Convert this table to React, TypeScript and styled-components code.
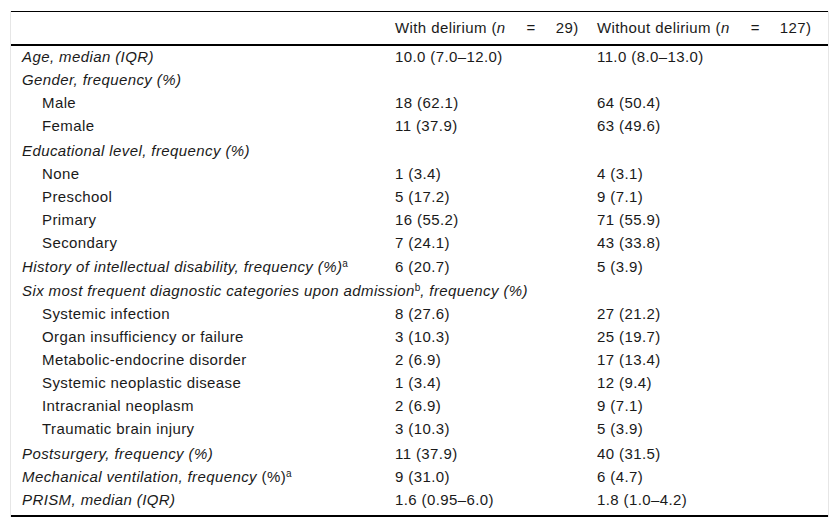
import React from 'react';
import styled, { createGlobalStyle } from 'styled-components';

const GlobalStyle = createGlobalStyle`
  html, body {
    margin: 0;
    padding: 0;
    background: #ffffff;
  }
  body {
    font-family: "Liberation Sans", Arial, sans-serif;
    color: #1a1a1a;
  }
`;

const Frame = styled.div`
  margin: 11px 0 0 10px;
  width: 817px;
  border-left: 1px solid #e6e6e6;
  border-right: 1px solid #e6e6e6;
`;

const Table = styled.table`
  width: 100%;
  border-collapse: collapse;
  table-layout: fixed;
  font-size: 15px;
  line-height: 18px;
  letter-spacing: 0.4px;
  border-top: 1px solid #000;
  border-bottom: 2px solid #000;
`;

const HeadRow = styled.tr`
  border-bottom: 2px solid #000;
`;

const HeadCell = styled.th`
  font-weight: normal;
  text-align: left;
  padding: 7px 0 7px 10px;
  height: 18px;
  white-space: nowrap;
`;

const Eq = styled.span`
  display: inline-block;
  margin: 0 20px 0 21px;
`;

const Row = styled.tr<{ $extra?: number; $last?: boolean }>`
  td {
    padding-top: ${(p) => 2 + (p.$extra || 0)}px;
    padding-bottom: ${(p) => (p.$last ? '6px' : '3px')};
  }
`;

const Label = styled.td<{ $sub?: boolean }>`
  padding-left: ${(p) => (p.$sub ? '31px' : '11px')};
  font-style: ${(p) => (p.$sub ? 'normal' : 'italic')};
  white-space: nowrap;
  vertical-align: top;
`;

const Value = styled.td`
  padding-left: 10px;
  white-space: nowrap;
  vertical-align: top;
`;

const Upright = styled.span`
  font-style: normal;
`;

const Sup = styled.sup`
  font-style: normal;
  font-size: 10px;
  line-height: 0;
  vertical-align: 5px;
  letter-spacing: 0;
`;

type Item = {
  label: React.ReactNode;
  sub?: boolean;
  extra?: number;
  span?: boolean;
  a?: string;
  b?: string;
};

const rows: Item[] = [
  { label: 'Age, median (IQR)', a: '10.0 (7.0–12.0)', b: '11.0 (8.0–13.0)' },
  { label: 'Gender, frequency (%)' },
  { label: 'Male', sub: true, a: '18 (62.1)', b: '64 (50.4)' },
  { label: 'Female', sub: true, a: '11 (37.9)', b: '63 (49.6)' },
  { label: 'Educational level, frequency (%)', extra: 2 },
  { label: 'None', sub: true, a: '1 (3.4)', b: '4 (3.1)' },
  { label: 'Preschool', sub: true, a: '5 (17.2)', b: '9 (7.1)' },
  { label: 'Primary', sub: true, a: '16 (55.2)', b: '71 (55.9)' },
  { label: 'Secondary', sub: true, a: '7 (24.1)', b: '43 (33.8)' },
  {
    label: (
      <>
        History of intellectual disability, frequency (%)<Sup>a</Sup>
      </>
    ),
    extra: 1,
    a: '6 (20.7)',
    b: '5 (3.9)',
  },
  {
    label: (
      <>
        Six most frequent diagnostic categories upon admission<Sup>b</Sup>, frequency (%)
      </>
    ),
    extra: 1,
    span: true,
  },
  { label: 'Systemic infection', sub: true, a: '8 (27.6)', b: '27 (21.2)' },
  { label: 'Organ insufficiency or failure', sub: true, a: '3 (10.3)', b: '25 (19.7)' },
  { label: 'Metabolic-endocrine disorder', sub: true, a: '2 (6.9)', b: '17 (13.4)' },
  { label: 'Systemic neoplastic disease', sub: true, a: '1 (3.4)', b: '12 (9.4)' },
  { label: 'Intracranial neoplasm', sub: true, a: '2 (6.9)', b: '9 (7.1)' },
  { label: 'Traumatic brain injury', sub: true, a: '3 (10.3)', b: '5 (3.9)' },
  { label: 'Postsurgery, frequency (%)', extra: 2, a: '11 (37.9)', b: '40 (31.5)' },
  {
    label: (
      <>
        Mechanical ventilation, frequency <Upright>(%)</Upright>
        <Sup>a</Sup>
      </>
    ),
    a: '9 (31.0)',
    b: '6 (4.7)',
  },
  { label: 'PRISM, median (IQR)', a: '1.6 (0.95–6.0)', b: '1.8 (1.0–4.2)' },
];

export default function App() {
  return (
    <>
      <GlobalStyle />
      <Frame>
        <Table>
          <colgroup>
            <col style={{ width: 374 }} />
            <col style={{ width: 202 }} />
            <col />
          </colgroup>
          <thead>
            <HeadRow>
              <HeadCell />
              <HeadCell>
                With delirium (<i>n</i>
                <Eq>=</Eq>29)
              </HeadCell>
              <HeadCell>
                Without delirium (<i>n</i>
                <Eq>=</Eq>127)
              </HeadCell>
            </HeadRow>
          </thead>
          <tbody>
            {rows.map((r, i) => {
              const last = i === rows.length - 1;
              return r.span ? (
                <Row key={i} $extra={r.extra} $last={last}>
                  <Label colSpan={3}>{r.label}</Label>
                </Row>
              ) : (
                <Row key={i} $extra={r.extra} $last={last}>
                  <Label $sub={r.sub}>{r.label}</Label>
                  <Value>{r.a}</Value>
                  <Value>{r.b}</Value>
                </Row>
              );
            })}
          </tbody>
        </Table>
      </Frame>
    </>
  );
}
